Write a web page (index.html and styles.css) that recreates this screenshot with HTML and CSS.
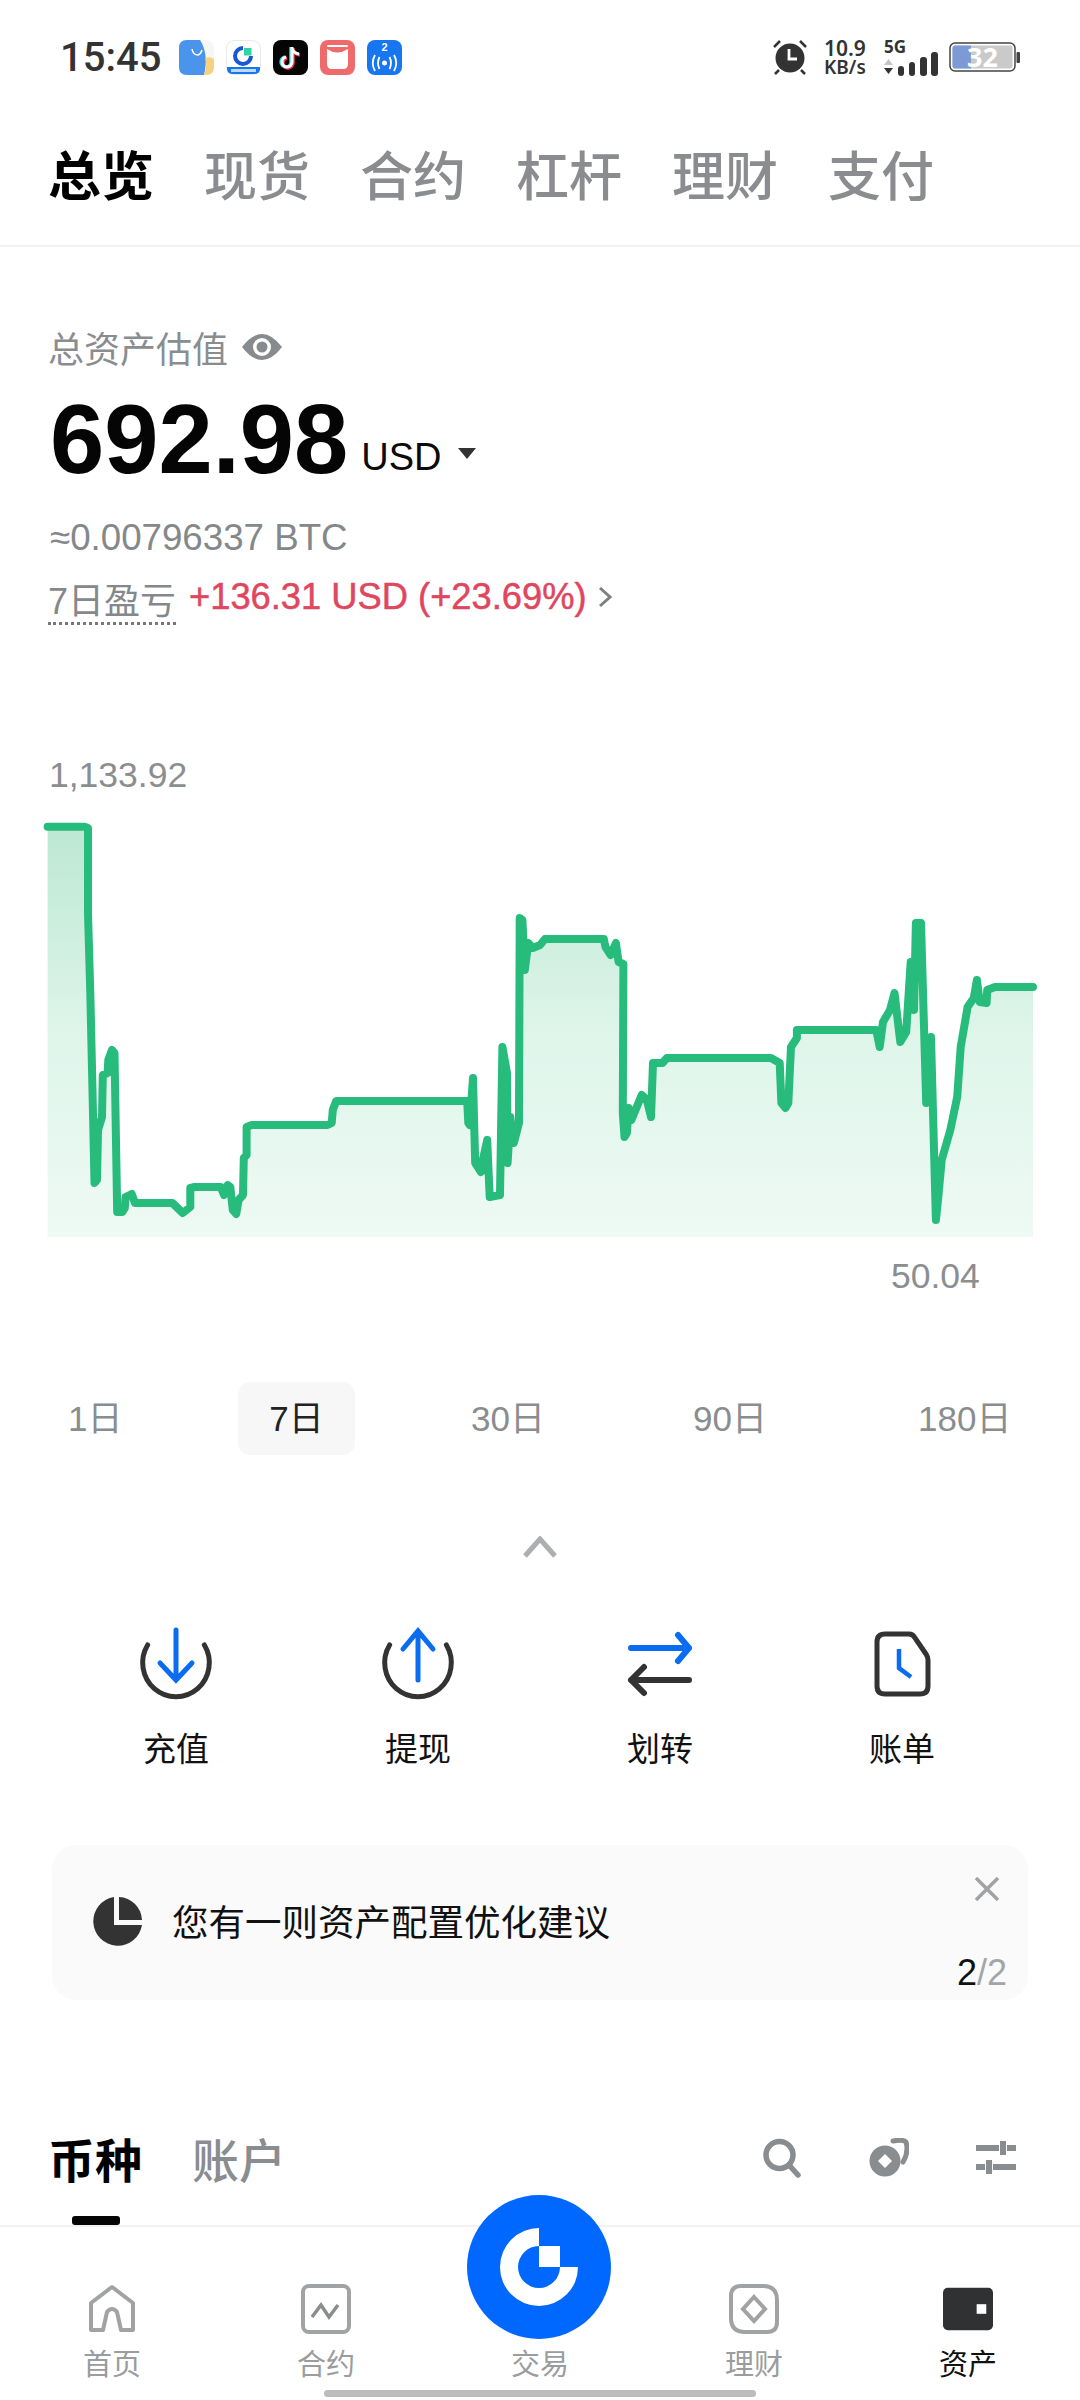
FILE: index.html
```html
<!DOCTYPE html>
<html lang="zh">
<head>
    <meta charset="utf-8">
    <title>总览</title>
    <link rel="stylesheet" href="styles.css">
</head>
<body>
<div class="phone">
    <div class="status-bar">
        <div class="status-left">
            <span class="clock">15:45</span>
            <svg class="app-icon" viewBox="0 0 35 35">
                <rect width="35" height="35" rx="8" fill="#f6f6f4"/>
                <path d="M8 0 H21 Q30 14 25 35 H8 Q0 35 0 27 V8 Q0 0 8 0Z" fill="#4a94ec"/>
                <path d="M25 35 Q29 24 26 18 Q31 16 35 19 V27 Q35 35 27 35Z" fill="#f7d27e"/>
                <path d="M13 9 Q14 15 19 15 Q22 14 23 10" fill="none" stroke="#fff" stroke-width="1.5"/>
            </svg>
            <svg class="app-icon" viewBox="0 0 35 35">
                <rect x=".5" y=".5" width="34" height="34" rx="8" fill="#fff" stroke="#e8e8e8"/>
                <path d="M17 6 A10 10 0 1 0 27 16 H23 A6 6 0 1 1 17 10Z" fill="#1a56d6"/>
                <rect x="18" y="8" width="7.500" height="7.500" fill="#2fd6a4"/>
                <path d="M1 27 H34 V29 Q34 34 28 34 H7 Q1 34 1 29Z" fill="#1577ea"/>
                <rect x="5" y="29" width="25" height="3" fill="#bcd8fa"/>
            </svg>
            <svg class="app-icon" viewBox="0 0 35 35">
                <rect width="35" height="35" rx="8" fill="#050505"/>
                <path d="M19 7 V22 A5 5 0 1 1 13 17 M19 8 Q20 13 26 14" fill="none" stroke="#25d8df" stroke-width="3.500" transform="translate(-1 0)"/>
                <path d="M19 7 V22 A5 5 0 1 1 13 17 M19 8 Q20 13 26 14" fill="none" stroke="#f0355a" stroke-width="3.500" transform="translate(1 1)"/>
                <path d="M19 7 V22 A5 5 0 1 1 13 17 M19 8 Q20 13 26 14" fill="none" stroke="#fff" stroke-width="3"/>
            </svg>
            <svg class="app-icon" viewBox="0 0 35 35">
                <rect width="35" height="35" rx="8" fill="#ef6a6a"/>
                <path d="M7 9 Q17 16 28 9 V24 Q28 29 23 29 H12 Q7 29 7 24Z" fill="#fff"/>
                <path d="M8 6 H27" stroke="#fff" stroke-width="2" stroke-linecap="round"/>
            </svg>
            <div class="app-badge">
                <span class="app-num">2</span>
                <svg class="app-waves" viewBox="0 0 35 18">
                    <circle cx="17.500" cy="9" r="2.500" fill="#fff"/>
                    <path d="M12.500 3 Q9.500 9 12.500 15 M22.500 3 Q25.500 9 22.500 15 M8 1 Q3.500 9 8 17 M27 1 Q31.500 9 27 17" fill="none" stroke="#fff" stroke-width="1.800"/>
                </svg>
            </div>
        </div>
        <div class="status-right">
            <svg class="alarm" viewBox="0 0 36 36">
                <circle cx="18" cy="19" r="14.500" fill="#333"/>
                <path d="M17 10 V20 H25" fill="none" stroke="#fff" stroke-width="2.800"/>
                <path d="M2 8 L8 2 M28 2 L34 8 M7 31 L3 35 M29 31 L33 35" stroke="#333" stroke-width="2.500"/>
            </svg>
            <div class="speed"><span>10.9</span><span class="speed-unit">KB/s</span></div>
            <div class="net">
                <span class="net-type">5G</span>
                <svg class="net-arrows" viewBox="0 0 9 16">
                    <path d="M0 6 L4.500 0 L9 6Z" fill="#c4c4c4"/>
                    <path d="M0 9 H9 L4.500 15Z" fill="#333"/>
                </svg>
            </div>
            <svg class="signal" viewBox="0 0 40 24">
                <rect x="0" y="14" width="6" height="10" rx="3" fill="#333"/>
                <rect x="11" y="10" width="6" height="14" rx="3" fill="#333"/>
                <rect x="22" y="5" width="7" height="19" rx="3" fill="#333"/>
                <rect x="33" y="0" width="7" height="24" rx="3" fill="#333"/>
            </svg>
            <div class="battery">
                <svg class="battery-shape" viewBox="0 0 71 30">
                    <rect x="1" y="1" width="65" height="28" rx="5" fill="#fff" stroke="#444" stroke-width="1.500"/>
                    <rect x="3.500" y="3.500" width="60" height="23" rx="2.500" fill="#cacaca"/>
                    <path d="M6 3.500 H22 V26.500 H6 Q3.500 26.500 3.500 24 V6 Q3.500 3.500 6 3.500Z" fill="#7c9ad6"/>
                    <rect x="67.500" y="10" width="3.500" height="11" rx="1" fill="#444"/>
                </svg>
                <span class="battery-text">32</span>
            </div>
        </div>
    </div>

    <div class="top-tabs">
        <span class="top-tab active">总览</span>
        <span class="top-tab">现货</span>
        <span class="top-tab">合约</span>
        <span class="top-tab">杠杆</span>
        <span class="top-tab">理财</span>
        <span class="top-tab">支付</span>
    </div>

    <div class="summary">
        <div class="total-label">
            <span>总资产估值</span>
            <svg class="eye" viewBox="0 0 40 28">
                <path d="M0 14 Q10 1 20 1 Q30 1 40 14 Q30 27 20 27 Q10 27 0 14Z" fill="#878b8d"/>
                <circle cx="20" cy="14" r="9" fill="#fff"/>
                <circle cx="20" cy="14" r="5.500" fill="#878b8d"/>
            </svg>
        </div>
        <div class="total-amount">
            <span class="amount">692.98</span>
            <span class="currency">USD</span>
            <span class="caret"></span>
        </div>
        <div class="btc">≈0.00796337 BTC</div>
        <div class="pnl">
            <span class="pnl-label">7日盈亏</span>
            <span class="pnl-value">+136.31 USD (+23.69%)</span>
            <svg class="pnl-arrow" viewBox="0 0 14 22">
                <path d="M2 2 L12 11 L2 20" fill="none" stroke="#7d8082" stroke-width="3"/>
            </svg>
        </div>
    </div>

    <div class="chart">
        <div class="chart-max">1,133.92</div>
        <svg class="chart-svg" viewBox="0 0 1080 450">
            <defs>
                <linearGradient id="chartFill" x1="0" y1="0" x2="0" y2="1">
                    <stop offset="0" stop-color="#bce8d3"/>
                    <stop offset="0.5" stop-color="#def5ea"/>
                    <stop offset="1" stop-color="#eefaf4"/>
                </linearGradient>
            </defs>
            <path class="chart-area" fill="url(#chartFill)" d="M47.600 26.700 L84.500 26.700 88 28 88 113 90.300 193 93 313 94.500 383 97 380 98 330 102 317 102.800 275 107.600 273 108.300 260 112 250 114.500 253 117.200 412 122.400 412 124.800 408 125.500 397 131.700 394 135 403 169 403 172.400 403 182.800 413 190.300 407 190.300 388 194.800 387 220.700 387 224 395 227.600 385 230.300 387 232.800 410 236.200 414 238.600 400 243 395 243.800 358 246.600 355 246.600 327 251.700 325 327.600 325 331.700 323 332.800 310 336.200 301 467.200 301 468.300 323 469.700 325 473 278 475.200 363 481 372 482.800 360 487.200 340 489.700 397 500 395 502.400 247 507 273 507.600 363 510.300 317 513.800 343 519 323 519.700 118 522.400 120 524.800 170 528.300 143 532.800 148 540 145 545 139 603.800 139 605.500 147 610.700 155 615.900 143 618.600 162 623.400 164 622.800 313 624.500 337 626.900 333 628.600 308 631.400 320 641.700 295 646.900 300 651 317 653 263 662.400 263 666.900 258 771 258 779.700 263 781.400 303 785.500 308 788.300 303 791 247 796.900 238 796.900 230 876.200 230 879.700 247 883 222 890 210 894.500 193 900.300 242 906.200 232 910.700 162 914 210 915.900 123 921 123 926.200 303 931 237 935.900 420 938.300 397 941.700 360 950.300 330 957.200 297 960.700 247 967.600 207 973.800 198 976.900 180 979.700 202 986.600 203 987.200 190 995 187 1033 187 L1033 437 L47.600 437Z"/>
            <path class="chart-line" d="M47.600 26.700 L84.500 26.700 88 28 88 113 90.300 193 93 313 94.500 383 97 380 98 330 102 317 102.800 275 107.600 273 108.300 260 112 250 114.500 253 117.200 412 122.400 412 124.800 408 125.500 397 131.700 394 135 403 169 403 172.400 403 182.800 413 190.300 407 190.300 388 194.800 387 220.700 387 224 395 227.600 385 230.300 387 232.800 410 236.200 414 238.600 400 243 395 243.800 358 246.600 355 246.600 327 251.700 325 327.600 325 331.700 323 332.800 310 336.200 301 467.200 301 468.300 323 469.700 325 473 278 475.200 363 481 372 482.800 360 487.200 340 489.700 397 500 395 502.400 247 507 273 507.600 363 510.300 317 513.800 343 519 323 519.700 118 522.400 120 524.800 170 528.300 143 532.800 148 540 145 545 139 603.800 139 605.500 147 610.700 155 615.900 143 618.600 162 623.400 164 622.800 313 624.500 337 626.900 333 628.600 308 631.400 320 641.700 295 646.900 300 651 317 653 263 662.400 263 666.900 258 771 258 779.700 263 781.400 303 785.500 308 788.300 303 791 247 796.900 238 796.900 230 876.200 230 879.700 247 883 222 890 210 894.500 193 900.300 242 906.200 232 910.700 162 914 210 915.900 123 921 123 926.200 303 931 237 935.900 420 938.300 397 941.700 360 950.300 330 957.200 297 960.700 247 967.600 207 973.800 198 976.900 180 979.700 202 986.600 203 987.200 190 995 187 1033 187"/>
        </svg>
        <div class="chart-min">50.04</div>
    </div>

    <div class="ranges">
        <span class="range">1日</span>
        <span class="range active">7日</span>
        <span class="range">30日</span>
        <span class="range">90日</span>
        <span class="range">180日</span>
    </div>

    <div class="collapse">
        <svg class="collapse-icon" viewBox="0 0 34 22">
            <path d="M2 20 L17 3 L32 20" fill="none" stroke="#acaeb0" stroke-width="5"/>
        </svg>
    </div>

    <div class="actions">
        <div class="action">
            <svg class="action-icon" viewBox="0 0 80 76">
                <path d="M11.600 18 A33.300 34 0 1 0 68.400 18" fill="none" stroke="#333" stroke-width="5" stroke-linecap="round"/>
                <path d="M40 3 V52 M24 36 L40 53 L56 36" fill="none" stroke="#0a6cf0" stroke-width="5" stroke-linecap="round"/>
            </svg>
            <span>充值</span>
        </div>
        <div class="action">
            <svg class="action-icon" viewBox="0 0 80 76">
                <path d="M11.600 18 A33.300 34 0 1 0 68.400 18" fill="none" stroke="#333" stroke-width="5" stroke-linecap="round"/>
                <path d="M40 4 V53 M25 22 L40 4 L55 22" fill="none" stroke="#0a6cf0" stroke-width="5" stroke-linecap="round"/>
            </svg>
            <span>提现</span>
        </div>
        <div class="action">
            <svg class="action-icon" viewBox="0 0 80 76">
                <path d="M11 21 H69 M58 8 L69 21 L58 34" fill="none" stroke="#0a6cf0" stroke-width="6" stroke-linecap="round" stroke-linejoin="round"/>
                <path d="M69 53 H11 M24 40 L11 53 L24 66" fill="none" stroke="#333" stroke-width="6" stroke-linecap="round" stroke-linejoin="round"/>
            </svg>
            <span>划转</span>
        </div>
        <div class="action">
            <svg class="action-icon" viewBox="0 0 80 76">
                <path d="M23 7 H47 Q51 7 53 11 L64 27 Q66 30 66 33 V59 Q66 67 58 67 H23 Q15 67 15 59 V15 Q15 7 23 7Z" fill="none" stroke="#333" stroke-width="5"/>
                <path d="M37 22 V41 L49 50" fill="none" stroke="#0a6cf0" stroke-width="4.500"/>
            </svg>
            <span>账单</span>
        </div>
    </div>

    <div class="advice">
        <svg class="advice-icon" viewBox="0 0 50 50">
            <path d="M22 1 A24.500 24.500 0 1 0 50 29 H22Z" fill="#333"/>
            <path d="M27 1 A24 24 0 0 1 50 24 H27Z" fill="#333"/>
        </svg>
        <span class="advice-text">您有一则资产配置优化建议</span>
        <svg class="advice-close" viewBox="0 0 26 26">
            <path d="M2 2 L24 24 M24 2 L2 24" stroke="#a0a3a5" stroke-width="3.500"/>
        </svg>
        <span class="advice-page">2<i>/2</i></span>
    </div>

    <div class="list-head">
        <div class="list-tabs">
            <span class="list-tab active">币种</span>
            <span class="list-tab">账户</span>
        </div>
        <div class="list-tools">
            <svg class="tool" viewBox="0 0 40 40">
                <circle cx="17.500" cy="17" r="13.500" fill="none" stroke="#8a8d8f" stroke-width="5.500"/>
                <path d="M27 27 L36 37" stroke="#8a8d8f" stroke-width="5.500" stroke-linecap="round"/>
            </svg>
            <svg class="tool" viewBox="0 0 40 40">
                <circle cx="16" cy="23" r="15.500" fill="#8a8d8f"/>
                <path d="M16 16 L23 23 L16 30 L9 23Z" fill="#fff"/>
                <path d="M24 3 Q34 1 37 4 Q40 14 34 24" fill="none" stroke="#8a8d8f" stroke-width="5" stroke-linecap="round"/>
            </svg>
            <svg class="tool" viewBox="0 0 40 40">
                <path d="M0 10 H23 M31 10 H40 M27 3 V17" stroke="#8a8d8f" stroke-width="6" fill="none"/>
                <path d="M0 29 H9 M17 29 H40 M13 22 V36" stroke="#8a8d8f" stroke-width="6" fill="none"/>
            </svg>
        </div>
        <div class="list-marker"></div>
    </div>

    <div class="bottom-nav">
        <div class="nav-item">
            <svg class="nav-icon" viewBox="0 0 50 50">
                <path d="M4 46 V19 L25 3 L46 19 V46 H34 L30 28 Q25 22 20 28 L16 46Z" fill="none" stroke="#a0a2a4" stroke-width="4" stroke-linejoin="round"/>
            </svg>
            <span>首页</span>
        </div>
        <div class="nav-item">
            <svg class="nav-icon" viewBox="0 0 50 50">
                <rect x="2" y="2" width="46" height="46" rx="6" fill="none" stroke="#a0a2a4" stroke-width="4"/>
                <path d="M11 33 L20 21 L28 33 L37 21" fill="none" stroke="#8a8c8e" stroke-width="3.500"/>
            </svg>
            <span>合约</span>
        </div>
        <div class="nav-item nav-trade">
            <div class="trade-btn">
                <svg class="trade-logo" viewBox="0 0 144 144">
                    <path d="M72 33 A39 39 0 1 0 111 72 H93 A21 21 0 1 1 72 51Z" fill="#fff"/>
                    <rect x="72" y="51" width="21" height="21" fill="#fff"/>
                </svg>
            </div>
            <span>交易</span>
        </div>
        <div class="nav-item">
            <svg class="nav-icon" viewBox="0 0 50 50">
                <path d="M12 2 H34 Q48 2 48 16 V38 Q48 48 38 48 H16 Q2 48 2 34 V12 Q2 2 12 2Z" fill="none" stroke="#a0a2a4" stroke-width="4"/>
                <path d="M25 13 L36 25 L25 37 L14 25Z" fill="none" stroke="#a0a2a4" stroke-width="4"/>
            </svg>
            <span>理财</span>
        </div>
        <div class="nav-item active">
            <svg class="nav-icon" viewBox="0 0 52 50">
                <rect y="3" width="52" height="44" rx="5" fill="#303133"/>
                <rect x="35" y="20" width="10" height="10" fill="#fff"/>
            </svg>
            <span>资产</span>
        </div>
        <div class="home-bar"></div>
    </div>
</div>
</body>
</html>
```
FILE: styles.css
```css
* {
    box-sizing: border-box;
}
html, body {
    margin: 0;
    padding: 0;
    background: #fff;
}
body {
    font-family: "Liberation Sans", "Noto Sans CJK SC", sans-serif;
    color: #0b0b0b;
}
.phone {
    position: relative;
    width: 1080px;
    height: 2400px;
    overflow: hidden;
}

/* status bar */
.status-bar {
    display: flex;
    justify-content: space-between;
    align-items: center;
    height: 114px;
    padding: 0 60px;
}
.status-left {
    display: flex;
    align-items: center;
    gap: 12px;
}
.clock {
    width: 107px;
    font-family: Roboto, sans-serif;
    font-size: 40px;
    font-weight: 500;
    color: #333;
}
.app-icon {
    width: 35px;
    height: 35px;
}
.app-badge {
    display: flex;
    flex-direction: column;
    align-items: center;
    width: 35px;
    height: 35px;
    border-radius: 8px;
    background: #1677f0;
}
.app-num {
    font-size: 11px;
    font-weight: 700;
    line-height: 14px;
    color: #fff;
}
.app-waves {
    width: 35px;
    height: 18px;
}
.status-right {
    display: flex;
    align-items: center;
}
.alarm {
    width: 36px;
    height: 36px;
}
.speed {
    display: flex;
    flex-direction: column;
    width: 60px;
    margin-left: 16px;
    font-family: "Noto Sans", sans-serif;
    font-size: 21px;
    font-weight: 600;
    line-height: 20px;
    color: #333;
}
.speed-unit {
    font-size: 19px;
    line-height: 18px;
}
.net {
    display: flex;
    flex-direction: column;
    width: 14px;
    height: 36px;
}
.net-type {
    font-family: "Noto Sans", sans-serif;
    font-size: 17px;
    font-weight: 700;
    line-height: 16px;
    color: #333;
}
.net-arrows {
    width: 9px;
    height: 16px;
    margin-top: 4px;
}
.signal {
    align-self: flex-end;
    width: 40px;
    height: 24px;
}
.battery {
    position: relative;
    display: flex;
    justify-content: center;
    width: 71px;
    height: 30px;
    margin-left: 11px;
}
.battery-shape {
    position: absolute;
    left: 0;
    top: 0;
    width: 71px;
    height: 30px;
}
.battery-text {
    position: relative;
    padding-right: 4px;
    font-family: "Noto Sans", sans-serif;
    font-size: 27px;
    font-weight: 700;
    line-height: 30px;
    color: #fff;
}

/* top tabs */
.top-tabs {
    display: flex;
    gap: 103px;
    height: 133px;
    padding: 22px 0 0 48px;
    border-bottom: 2px solid #f2f2f2;
}
.top-tab {
    font-family: "Noto Sans CJK SC", sans-serif;
    font-size: 53px;
    font-weight: 500;
    line-height: 74px;
    white-space: nowrap;
    width: 53px;
    color: #8a8c8f;
}
.top-tab.active {
    font-weight: 700;
    color: #000;
}

/* asset summary */
.summary {
    padding: 75px 0 0 50px;
}
.total-label {
    display: flex;
    align-items: center;
    gap: 14px;
    margin-left: -2px;
    font-family: "Noto Sans CJK SC", sans-serif;
    font-size: 36px;
    line-height: 50px;
    color: #8a8d8f;
}
.eye {
    width: 40px;
    height: 28px;
}
.total-amount {
    display: flex;
    align-items: baseline;
    height: 112px;
    margin-top: 12px;
}
.amount {
    font-size: 97.500px;
    font-weight: 700;
    line-height: 112px;
    color: #050505;
}
.currency {
    margin-left: 13px;
    font-size: 38px;
    transform: translateY(-3px);
}
.caret {
    width: 0;
    height: 0;
    margin-left: 17px;
    border-left: 9px solid transparent;
    border-right: 9px solid transparent;
    border-top: 11px solid #333;
    transform: translateY(-14px);
}
.btc {
    margin-top: 17px;
    font-size: 36.700px;
    line-height: 50px;
    color: #85888a;
}
.pnl {
    display: flex;
    align-items: center;
    height: 52px;
    margin-top: 12px;
}
.pnl-label {
    margin-left: -2px;
    padding-top: 5px;
    font-size: 36px;
    line-height: 40px;
    color: #85888a;
    border-bottom: 3px dotted #777;
}
.pnl-value {
    margin-left: 13px;
    font-size: 36.300px;
    line-height: 46px;
    color: #e0475f;
    -webkit-text-stroke: 0.5px #e0475f;
    transform: translateY(-4px);
}
.pnl-arrow {
    width: 14px;
    height: 22px;
    margin-left: 11px;
    transform: translateY(-4px);
}

/* chart */
.chart {
    margin-top: 126px;
}
.chart-max {
    padding-left: 49px;
    font-size: 35.500px;
    line-height: 44px;
    color: #8b8e90;
}
.chart-svg {
    display: block;
    width: 1080px;
    height: 450px;
    margin-top: 3px;
}
.chart-area {
    stroke: none;
}
.chart-line {
    fill: none;
    stroke: #27bb7c;
    stroke-width: 8;
    stroke-linecap: round;
    stroke-linejoin: round;
}
.chart-min {
    margin-top: 4px;
    padding-left: 891px;
    font-size: 35.500px;
    line-height: 44px;
    color: #8b8e90;
}

/* range picker */
.ranges {
    display: grid;
    grid-template-columns: 170px 233px 222px 225px auto;
    align-items: center;
    height: 73px;
    margin-top: 84px;
    padding-left: 68px;
    font-size: 35px;
    color: #8a8d8f;
}
.range {
    line-height: 73px;
}
.range.active {
    width: 117px;
    border-radius: 12px;
    text-align: center;
    background: #f7f7f8;
    color: #222;
}
.collapse {
    display: flex;
    justify-content: center;
    margin-top: 81px;
}
.collapse-icon {
    width: 34px;
    height: 22px;
}

/* deposit / withdraw row */
.actions {
    display: grid;
    grid-template-columns: repeat(4, 242px);
    margin: 69px 0 0 55px;
}
.action {
    display: flex;
    flex-direction: column;
    align-items: center;
    font-family: "Noto Sans CJK SC", sans-serif;
    font-size: 33px;
    line-height: 48px;
    color: #111;
}
.action-icon {
    width: 80px;
    height: 76px;
    margin-bottom: 20px;
}

/* advice banner */
.advice {
    position: relative;
    display: flex;
    align-items: center;
    width: 976px;
    height: 155px;
    margin: 74px 0 0 52px;
    padding: 0 0 4px 40px;
    border-radius: 24px;
    background: #fafafa;
}
.advice-icon {
    width: 50px;
    height: 50px;
}
.advice-text {
    margin-left: 30px;
    font-family: "Noto Sans CJK SC", sans-serif;
    font-size: 36.500px;
    color: #111;
}
.advice-close {
    position: absolute;
    top: 31px;
    right: 28px;
    width: 26px;
    height: 26px;
}
.advice-page {
    position: absolute;
    right: 21px;
    bottom: 7px;
    font-size: 36px;
    line-height: 40px;
    color: #111;
}
.advice-page i {
    font-style: normal;
    color: #a3a6a8;
}

/* coin / account list header */
.list-head {
    position: relative;
    display: flex;
    justify-content: space-between;
    align-items: center;
    height: 227px;
    padding: 0 64px 0 48px;
    border-bottom: 2px solid #f2f2f2;
}
.list-tabs {
    display: flex;
    gap: 50px;
    margin-top: 90px;
}
.list-tab {
    font-family: "Noto Sans CJK SC", sans-serif;
    font-size: 47px;
    font-weight: 500;
    line-height: 66px;
    color: #8a8d8f;
}
.list-tab.active {
    font-weight: 700;
    color: #000;
}
.list-tools {
    display: flex;
    gap: 67px;
    margin-top: 91px;
}
.tool {
    width: 40px;
    height: 40px;
}
.list-marker {
    position: absolute;
    left: 72px;
    bottom: 0;
    width: 48px;
    height: 9px;
    border-radius: 3px;
    background: #050505;
}

/* bottom nav */
.bottom-nav {
    position: relative;
    display: grid;
    grid-template-columns: repeat(5, 214px);
    padding: 57px 0 0 5px;
}
.nav-item {
    display: flex;
    flex-direction: column;
    align-items: center;
    font-family: "Noto Sans CJK SC", sans-serif;
    font-size: 29px;
    line-height: 42px;
    color: #9a9c9e;
}
.nav-item.active {
    color: #111;
}
.nav-icon {
    width: 50px;
    height: 50px;
    margin-bottom: 7px;
}
.nav-trade {
    justify-content: flex-end;
}
.trade-btn {
    position: absolute;
    top: -32px;
    left: 467px;
    width: 144px;
    height: 144px;
    border-radius: 50%;
    background: #0068ff;
}
.trade-logo {
    display: block;
    width: 144px;
    height: 144px;
}
.home-bar {
    position: absolute;
    left: 324px;
    top: 163px;
    width: 432px;
    height: 7px;
    border-radius: 4px;
    background: #bcbcbc;
}
```
